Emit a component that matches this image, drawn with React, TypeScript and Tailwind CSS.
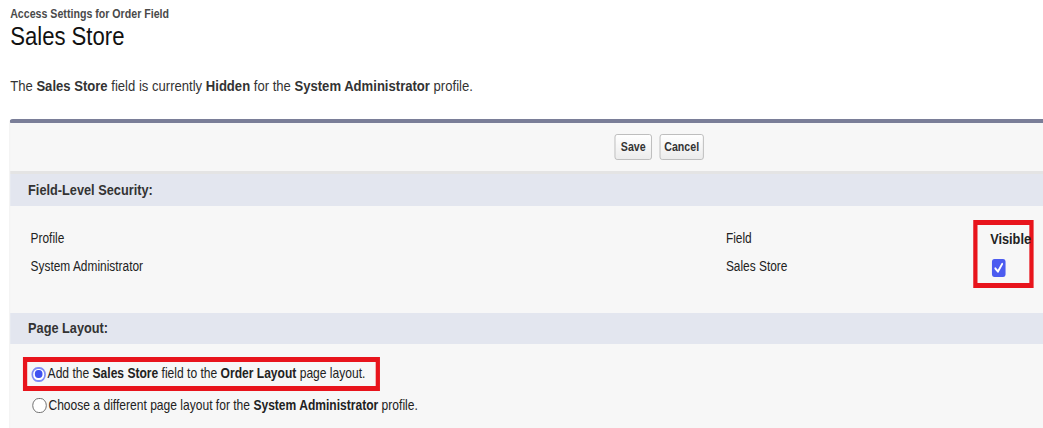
export default function App() {
  const font = { fontFamily: '"Liberation Sans", Arial, sans-serif' };
  return (
    <div className="w-[1043px] h-[428px] overflow-hidden bg-white">
      {/* the screenshot is horizontally condensed, so lay out wide and squeeze */}
      <div className="w-[1227px] h-[428px] origin-top-left scale-x-[0.85] text-[#222]" style={font}>
        {/* Header */}
        <div className="pl-[12px] pt-[7px]">
          <div className="text-[12.5px] font-bold text-[#4a4a4a] leading-[14px]">Access Settings for Order Field</div>
          <div className="text-[26px] leading-[30px] text-[#111]">Sales Store</div>
        </div>
        <div className="pl-[12px] pt-[26px] text-[15.4px] leading-[18px] text-[#333]">
          The <b>Sales Store</b> field is currently <b>Hidden</b> for the <b>System Administrator</b> profile.
        </div>

        {/* Panel */}
        <div className="ml-[11px] mt-[24px] w-[1300px] border-t-[4px] border-t-[#7a7e98] border-l border-l-[#dedede] rounded-tl-[4px] bg-[#f7f7f7]">
          <div className="h-[51px] flex items-center pl-[711px] gap-[9px] border-b-[3px] border-b-[#e4e4e4]">
            <button className="w-[44px] h-[26px] rounded-[3px] border border-[#b8b8b8] bg-gradient-to-b from-white to-[#ececec] text-[12.5px] font-bold text-[#333]">Save</button>
            <button className="w-[52px] h-[26px] rounded-[3px] border border-[#b8b8b8] bg-gradient-to-b from-white to-[#ececec] text-[12.5px] font-bold text-[#333]">Cancel</button>
          </div>

          <div className="h-[32px] bg-[#e3e6ef] flex items-center pl-[21px] text-[15px] font-bold text-[#333]">Field-Level Security:</div>

          <div className="h-[107px] relative text-[14px] text-[#222]">
            <div className="flex pt-[24px] pl-[24px]">
              <div className="w-[818px] flex flex-col gap-[11px]">
                <span className="leading-[17px]">Profile</span>
                <span className="leading-[17px]">System Administrator</span>
              </div>
              <div className="w-[260px] flex flex-col gap-[11px]">
                <span className="leading-[17px]">Field</span>
                <span className="leading-[17px]">Sales Store</span>
              </div>
            </div>
            <div className="absolute left-[1133px] top-[14px] w-[71px] h-[68px] border-[5px] border-[#e8141c] flex flex-col items-end">
              <span className="text-[15px] font-bold leading-[17px] mt-[5px] -mr-[2px]">Visible</span>
              <span className="mt-[12px] mr-[28px] w-[16px] h-[18px] rounded-[3px] bg-[#4c5cf0] flex items-center justify-center">
                <svg viewBox="0 0 16 18" className="w-[16px] h-[18px]">
                  <path d="M4 9.4 L7 12.6 L12 5" fill="none" stroke="white" strokeWidth="2.2" strokeLinecap="round" strokeLinejoin="round" />
                </svg>
              </span>
            </div>
          </div>

          <div className="h-[31px] bg-[#e3e6ef] flex items-center pl-[21px] text-[15px] font-bold text-[#333]">Page Layout:</div>

          <div className="h-[90px] pt-[13px] text-[14.2px] text-[#222]">
            <div className="ml-[15px] w-[420px] h-[34px] border-[5px] border-[#e8141c] flex items-center pl-[5px] gap-[2px]">
              <span className="w-[17px] h-[15px] rounded-full border-[2px] border-[#7f8cf5] bg-white flex items-center justify-center">
                <span className="w-[9px] h-[8px] rounded-full bg-[#3f52f0]" />
              </span>
              <span>Add the <b>Sales Store</b> field to the <b>Order Layout</b> page layout.</span>
            </div>
            <div className="ml-[26px] mt-[4px] flex items-center gap-[2px]">
              <span className="w-[17px] h-[15px] rounded-full border border-[#666] bg-white" />
              <span>Choose a different page layout for the <b>System Administrator</b> profile.</span>
            </div>
          </div>
        </div>
      </div>
    </div>
  );
}
